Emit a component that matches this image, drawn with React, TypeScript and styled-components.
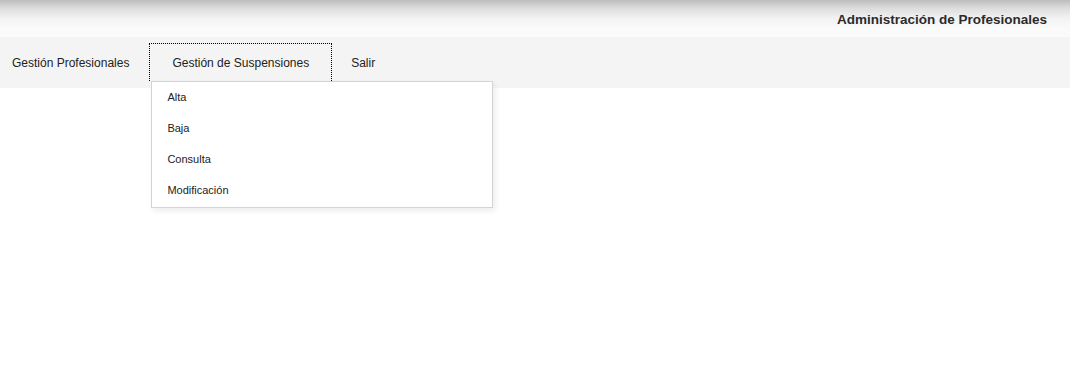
import React from "react";
import styled, { createGlobalStyle } from "styled-components";

const Global = createGlobalStyle`
  html, body { margin: 0; padding: 0; background: #fff; }
  body { font-family: Arial, "Liberation Sans", Helvetica, sans-serif; color: #222; }
`;

const Page = styled.div`
  width: 1070px;
  min-height: 379px;
  background: #fff;
`;

const Header = styled.header`
  height: 37px;
  display: flex;
  align-items: center;
  justify-content: flex-end;
  padding-right: 23px;
  box-sizing: border-box;
  background: linear-gradient(#bdbdbd 0px, #dcdcdc 8px, #f2f2f2 18px, #fafafa 28px, #fbfbfb 37px);
`;

const Title = styled.h1`
  margin: 0;
  font-size: 13.5px;
  font-weight: bold;
  color: #2b2b2b;
  padding-top: 1px;
`;

const NavBar = styled.nav`
  height: 51px;
  background: #f4f4f4;
  display: flex;
  align-items: stretch;
`;

const NavItem = styled.div<{ $padL: number; $padR: number }>`
  position: relative;
  display: flex;
  align-items: center;
  padding: 0 ${(p) => p.$padR}px 0 ${(p) => p.$padL}px;
  font-size: 12px;
  color: #222;
  cursor: pointer;
`;

const FocusBox = styled.span`
  display: flex;
  align-items: center;
  height: 38px;
  margin-top: 6px;
  margin-bottom: 7px;
  padding: 1px 22px 0 22px;
  border: 1px dotted #000;
  border-bottom: none;
  box-sizing: border-box;
`;

const Label = styled.span`
  line-height: 14px;
`;

const Dropdown = styled.ul`
  position: absolute;
  top: 44px;
  left: 2px;
  width: 342px;
  margin: 0;
  padding: 0 0 1px;
  list-style: none;
  background: #fff;
  border: 1px solid #d4d4d4;
  box-sizing: border-box;
  box-shadow: 2px 3px 6px rgba(0, 0, 0, 0.08);
  z-index: 10;
`;

const DropItem = styled.li`
  height: 31px;
  box-sizing: border-box;
  padding: 0 0 2px 15px;
  display: flex;
  align-items: center;
  font-size: 11px;
  color: #222;
`;

export default function App() {
  const sub = ["Alta", "Baja", "Consulta", "Modificación"];
  return (
    <Page>
      <Global />
      <Header>
        <Title>Administración de Profesionales</Title>
      </Header>
      <NavBar>
        <NavItem $padL={12} $padR={20}>
          <Label>Gestión Profesionales</Label>
        </NavItem>
        <NavItem $padL={0} $padR={19}>
          <FocusBox>
            <Label>Gestión de Suspensiones</Label>
          </FocusBox>
          <Dropdown>
            {sub.map((s) => (
              <DropItem key={s}>{s}</DropItem>
            ))}
          </Dropdown>
        </NavItem>
        <NavItem $padL={0} $padR={12}>
          <Label>Salir</Label>
        </NavItem>
      </NavBar>
    </Page>
  );
}
